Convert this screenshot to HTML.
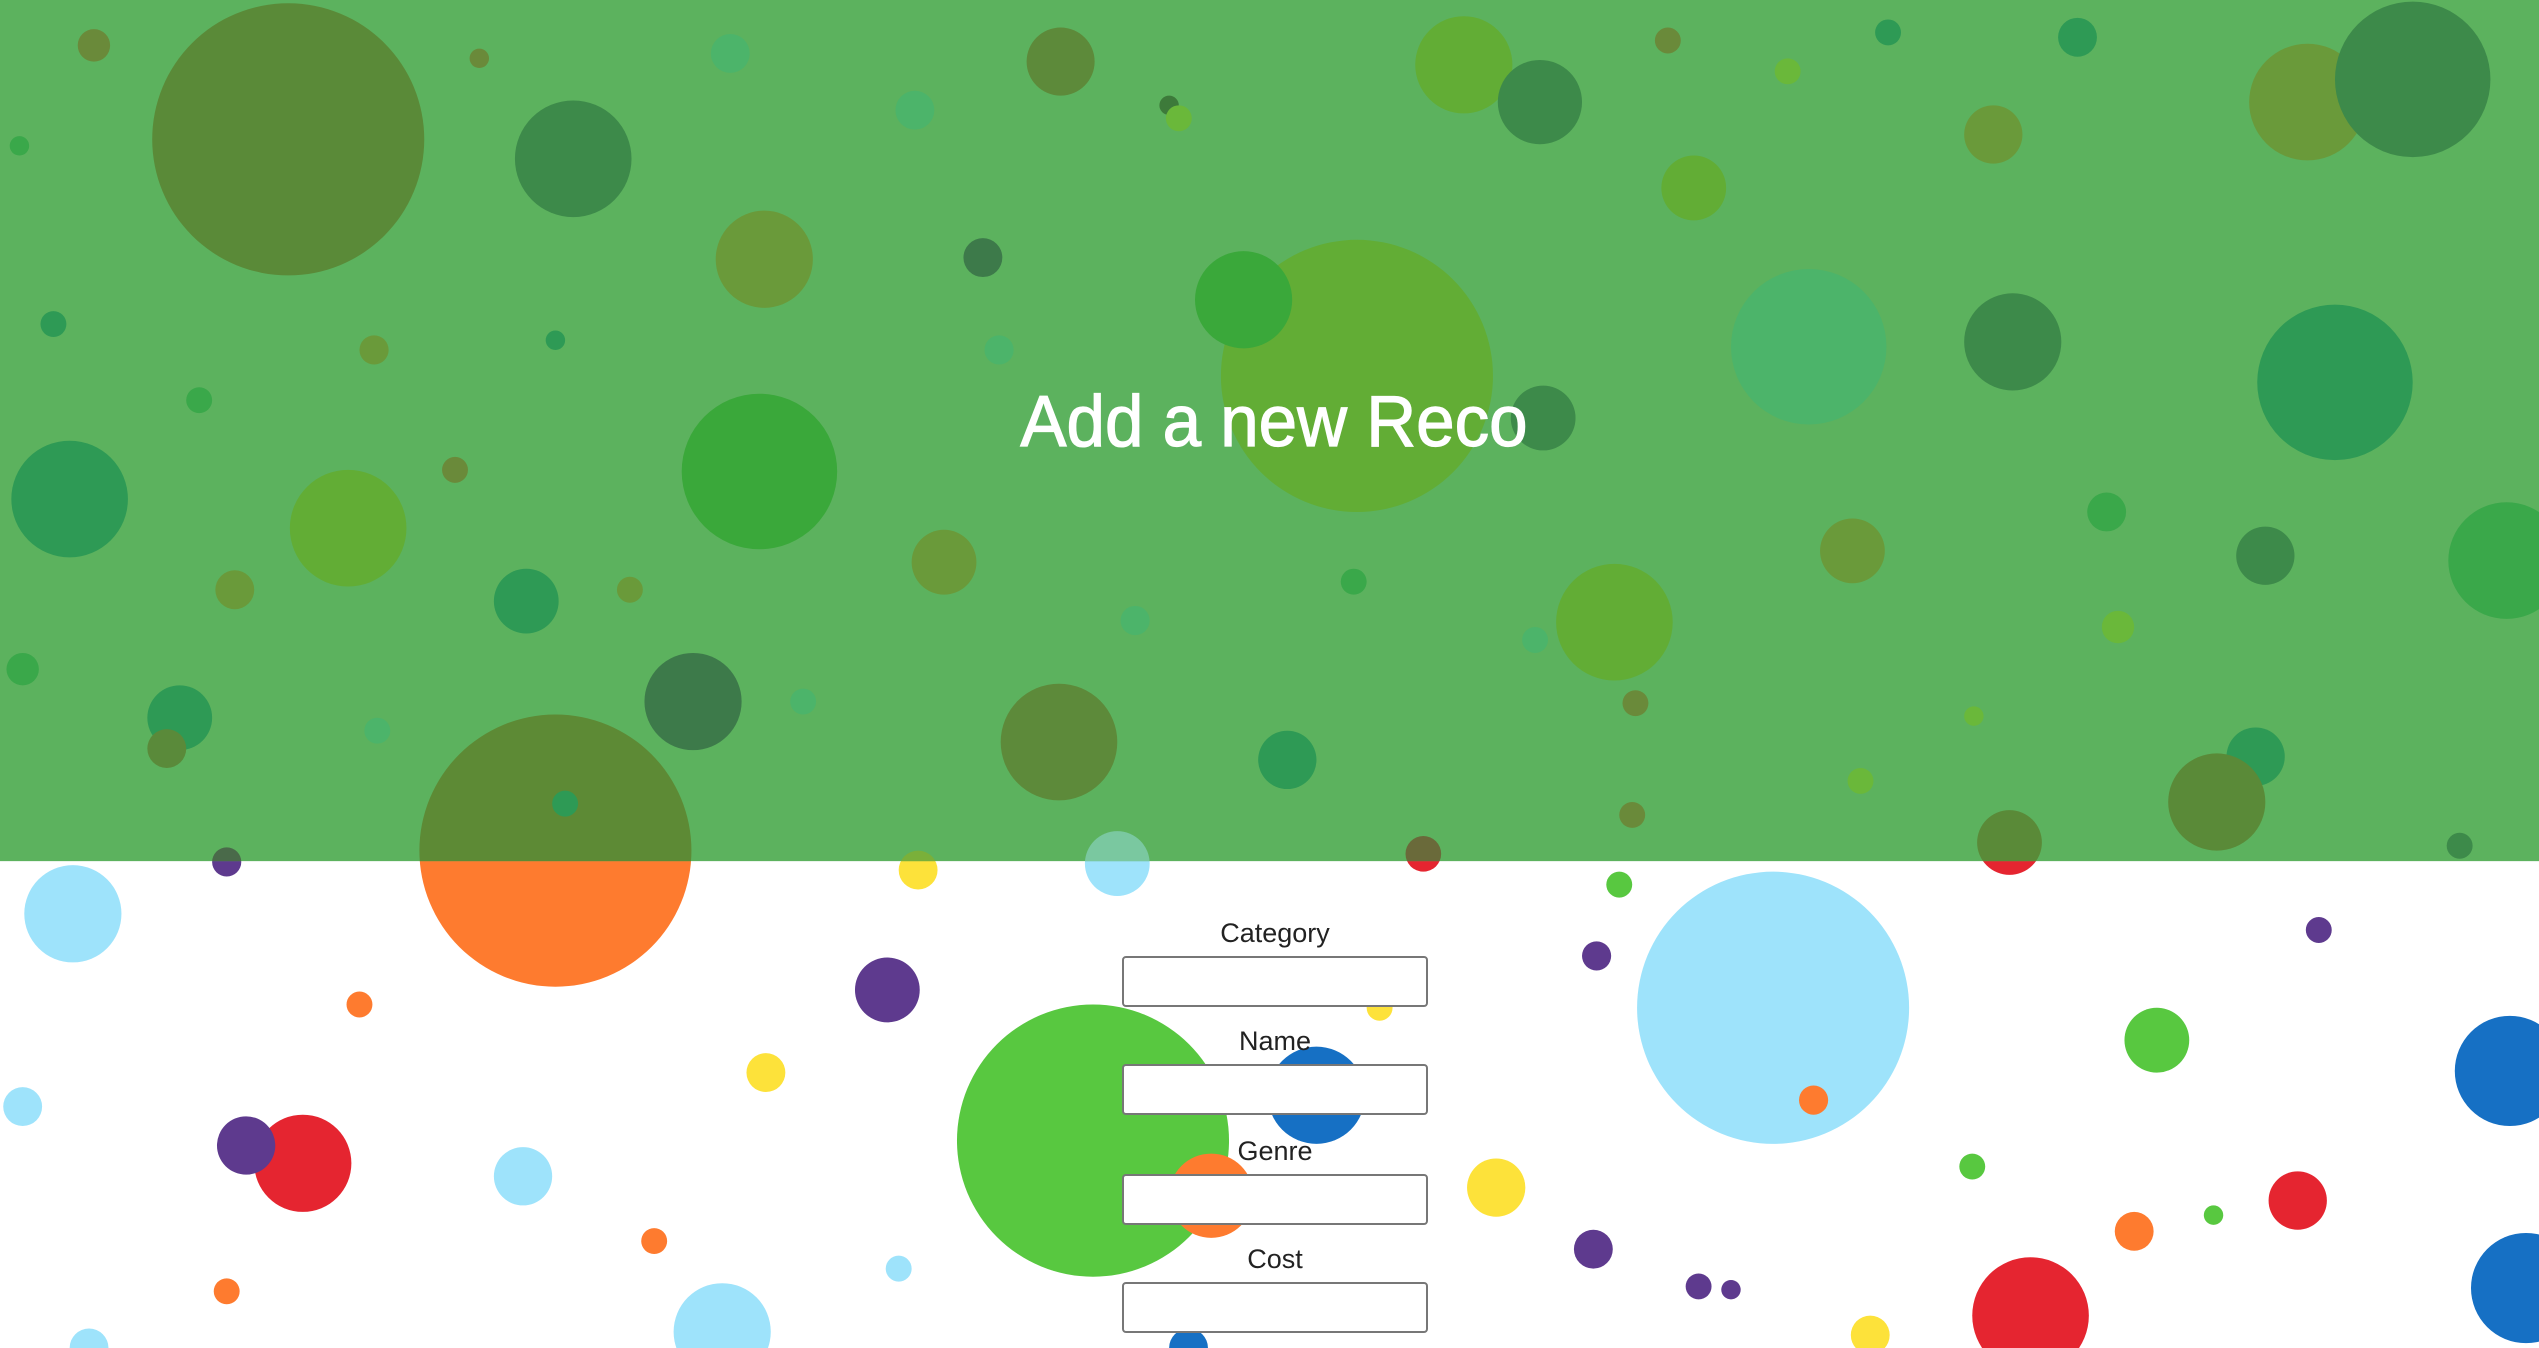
<!DOCTYPE html>
<html><head><meta charset="utf-8"><style>
html,body{margin:0;padding:0;width:2539px;height:1348px;overflow:hidden;background:#fff;font-family:"Liberation Sans",sans-serif}
svg{position:absolute;left:0;top:0}
h1{position:absolute;left:0;width:2548px;top:372px;margin:0;text-align:center;color:#fff;font-size:72px;font-weight:normal;line-height:100px;white-space:nowrap;transform:scaleX(0.96);transform-origin:1274px 50%;-webkit-text-stroke:1.2px #fff}
.l{position:absolute;width:306px;text-align:center;font-size:27px;color:#222;line-height:30px}
.i{position:absolute;background:#fff;border:2px solid #777;border-radius:4px;box-sizing:border-box;width:306px;height:51px}
</style></head><body>
<svg width="2539" height="1348" viewBox="0 0 1568 832" preserveAspectRatio="none">
<defs><clipPath id="g"><rect x="0" y="0" width="1568" height="531.5"/></clipPath></defs>
<g>
<circle cx="45" cy="564" r="30" fill="#9ee3fb"/><circle cx="140" cy="532" r="9" fill="#5e3a8e"/>
<circle cx="343" cy="525" r="84" fill="#fe7b2f"/><circle cx="567" cy="537" r="12" fill="#fde23a"/>
<circle cx="690" cy="533" r="20" fill="#9ee3fb"/><circle cx="879" cy="527" r="11" fill="#e52530"/>
<circle cx="1241" cy="520" r="20" fill="#e52530"/><circle cx="1000" cy="546" r="8" fill="#58c840"/>
<circle cx="986" cy="590" r="9" fill="#5e3a8e"/><circle cx="1095" cy="622" r="84" fill="#9ee3fb"/>
<circle cx="1120" cy="679" r="9" fill="#fe7b2f"/><circle cx="1432" cy="574" r="8" fill="#5e3a8e"/>
<circle cx="548" cy="611" r="20" fill="#5e3a8e"/><circle cx="222" cy="620" r="8" fill="#fe7b2f"/>
<circle cx="852" cy="622" r="8" fill="#fde23a"/><circle cx="675" cy="704" r="84" fill="#58c840"/>
<circle cx="813" cy="676" r="30" fill="#1670c4"/><circle cx="748" cy="738" r="26" fill="#fe7b2f"/>
<circle cx="473" cy="662" r="12" fill="#fde23a"/><circle cx="14" cy="683" r="12" fill="#9ee3fb"/>
<circle cx="187" cy="718" r="30" fill="#e52530"/><circle cx="152" cy="707" r="18" fill="#5e3a8e"/>
<circle cx="323" cy="726" r="18" fill="#9ee3fb"/><circle cx="924" cy="733" r="18" fill="#fde23a"/>
<circle cx="1332" cy="642" r="20" fill="#58c840"/><circle cx="1550" cy="661" r="34" fill="#1670c4"/>
<circle cx="1218" cy="720" r="8" fill="#58c840"/><circle cx="1419" cy="741" r="18" fill="#e52530"/>
<circle cx="1367" cy="750" r="6" fill="#58c840"/><circle cx="1318" cy="760" r="12" fill="#fe7b2f"/>
<circle cx="984" cy="771" r="12" fill="#5e3a8e"/><circle cx="1049" cy="794" r="8" fill="#5e3a8e"/>
<circle cx="1069" cy="796" r="6" fill="#5e3a8e"/><circle cx="404" cy="766" r="8" fill="#fe7b2f"/>
<circle cx="140" cy="797" r="8" fill="#fe7b2f"/><circle cx="555" cy="783" r="8" fill="#9ee3fb"/>
<circle cx="446" cy="822" r="30" fill="#9ee3fb"/><circle cx="1254" cy="812" r="36" fill="#e52530"/>
<circle cx="1155" cy="824" r="12" fill="#fde23a"/><circle cx="734" cy="832" r="12" fill="#1670c4"/>
<circle cx="1560" cy="795" r="34" fill="#1670c4"/><circle cx="55" cy="832" r="12" fill="#9ee3fb"/>
</g>
<rect x="0" y="0" width="1568" height="531.5" fill="#5cb25e"/>
<g clip-path="url(#g)">
<circle cx="178" cy="86" r="84" fill="#5a8a38"/><circle cx="354" cy="98" r="36" fill="#3d8a4a"/>
<circle cx="58" cy="28" r="10" fill="#6a8a3a"/><circle cx="296" cy="36" r="6" fill="#6a8a3a"/>
<circle cx="451" cy="33" r="12" fill="#4cb46a"/><circle cx="655" cy="38" r="21" fill="#5d8a3a"/>
<circle cx="565" cy="68" r="12" fill="#4cb46a"/><circle cx="722" cy="65" r="6" fill="#3d7a3a"/>
<circle cx="728" cy="73" r="8" fill="#6ab83a"/><circle cx="904" cy="40" r="30" fill="#62ad35"/>
<circle cx="951" cy="63" r="26" fill="#3d8a4a"/><circle cx="1030" cy="25" r="8" fill="#6a8a3a"/>
<circle cx="1104" cy="44" r="8" fill="#6ab83a"/><circle cx="1166" cy="20" r="8" fill="#2e9a55"/>
<circle cx="1283" cy="23" r="12" fill="#2e9a55"/><circle cx="1231" cy="83" r="18" fill="#6a9a3a"/>
<circle cx="1425" cy="63" r="36" fill="#6a9a3a"/><circle cx="1490" cy="49" r="48" fill="#3d8a4a"/>
<circle cx="12" cy="90" r="6" fill="#3aa84a"/><circle cx="472" cy="160" r="30" fill="#6a9a3a"/>
<circle cx="607" cy="159" r="12" fill="#3d7a4a"/><circle cx="33" cy="200" r="8" fill="#2e9a55"/>
<circle cx="231" cy="216" r="9" fill="#6a9a3a"/><circle cx="343" cy="210" r="6" fill="#2e9a55"/>
<circle cx="123" cy="247" r="8" fill="#3aa84a"/><circle cx="838" cy="232" r="84" fill="#62ad35"/>
<circle cx="768" cy="185" r="30" fill="#3aa83a"/><circle cx="617" cy="216" r="9" fill="#4cb46a"/>
<circle cx="953" cy="258" r="20" fill="#3d8a4a"/><circle cx="1046" cy="116" r="20" fill="#62ad35"/>
<circle cx="1117" cy="214" r="48" fill="#4cb46a"/><circle cx="1243" cy="211" r="30" fill="#3d8a4a"/>
<circle cx="1442" cy="236" r="48" fill="#2e9a55"/><circle cx="43" cy="308" r="36" fill="#2e9a55"/>
<circle cx="215" cy="326" r="36" fill="#62ad35"/><circle cx="281" cy="290" r="8" fill="#6a8a3a"/>
<circle cx="469" cy="291" r="48" fill="#3aa83a"/><circle cx="145" cy="364" r="12" fill="#6a9a3a"/>
<circle cx="325" cy="371" r="20" fill="#2e9a55"/><circle cx="389" cy="364" r="8" fill="#6a9a3a"/>
<circle cx="583" cy="347" r="20" fill="#6a9a3a"/><circle cx="701" cy="383" r="9" fill="#4cb46a"/>
<circle cx="836" cy="359" r="8" fill="#3aa84a"/><circle cx="997" cy="384" r="36" fill="#62ad35"/>
<circle cx="948" cy="395" r="8" fill="#4cb46a"/><circle cx="1144" cy="340" r="20" fill="#6a9a3a"/>
<circle cx="1301" cy="316" r="12" fill="#3aa84a"/><circle cx="1308" cy="387" r="10" fill="#6ab83a"/>
<circle cx="1399" cy="343" r="18" fill="#3d8a4a"/><circle cx="1548" cy="346" r="36" fill="#3aa84a"/>
<circle cx="14" cy="413" r="10" fill="#3aa84a"/><circle cx="111" cy="443" r="20" fill="#2e9a55"/>
<circle cx="103" cy="462" r="12" fill="#5a8a3a"/><circle cx="233" cy="451" r="8" fill="#4cb46a"/>
<circle cx="428" cy="433" r="30" fill="#3d7a4a"/><circle cx="496" cy="433" r="8" fill="#4cb46a"/>
<circle cx="654" cy="458" r="36" fill="#5d8a3a"/><circle cx="795" cy="469" r="18" fill="#2e9a55"/>
<circle cx="1010" cy="434" r="8" fill="#6a8a3a"/><circle cx="1219" cy="442" r="6" fill="#6ab83a"/>
<circle cx="1149" cy="482" r="8" fill="#6ab83a"/><circle cx="1393" cy="467" r="18" fill="#2e9a55"/>
<circle cx="1369" cy="495" r="30" fill="#5a8a38"/><circle cx="1008" cy="503" r="8" fill="#6a8a3a"/>
<circle cx="343" cy="525" r="84" fill="#5d8a35"/><circle cx="349" cy="496" r="8" fill="#2e9a55"/>
<circle cx="140" cy="532" r="9" fill="#4a6a4a"/><circle cx="567" cy="537" r="12" fill="#7ab03a"/>
<circle cx="690" cy="533" r="20" fill="#7ac8a0"/><circle cx="879" cy="527" r="11" fill="#6a6a3a"/>
<circle cx="1241" cy="520" r="20" fill="#5a8a38"/><circle cx="1519" cy="522" r="8" fill="#3d8a4a"/>
</g>
</svg>
<h1>Add a new Reco</h1>
<div class="l" style="left:1122px;top:918px">Category</div>
<div class="i" style="left:1122px;top:956px"></div>
<div class="l" style="left:1122px;top:1026px">Name</div>
<div class="i" style="left:1122px;top:1064px"></div>
<div class="l" style="left:1122px;top:1136px">Genre</div>
<div class="i" style="left:1122px;top:1174px"></div>
<div class="l" style="left:1122px;top:1244px">Cost</div>
<div class="i" style="left:1122px;top:1282px"></div>
</body></html>
